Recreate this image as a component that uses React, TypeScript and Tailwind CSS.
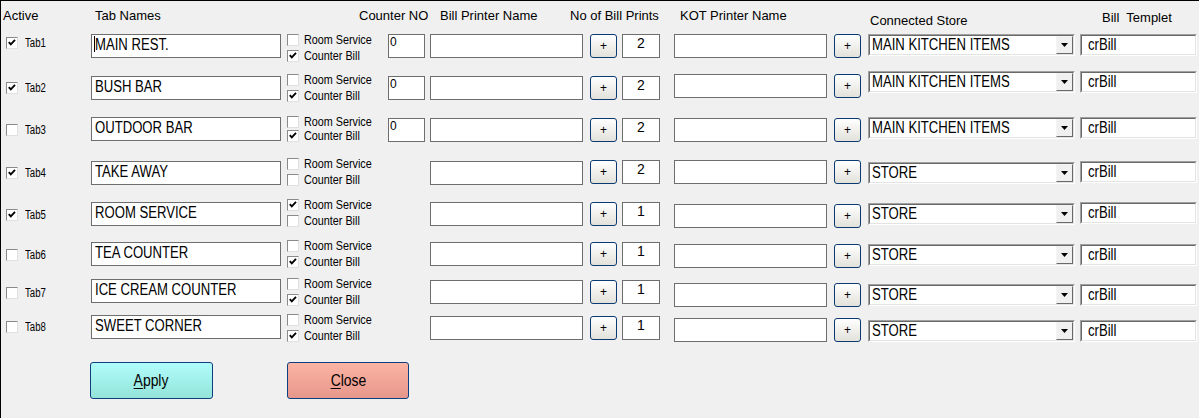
import React from 'react';

const MT = [
  'mt-0', 'mt-[1px]', 'mt-[2px]', 'mt-[3px]', 'mt-[4px]', 'mt-[5px]', 'mt-[6px]',
  'mt-[7px]', 'mt-[8px]', 'mt-[9px]', 'mt-[10px]', 'mt-[11px]', 'mt-[12px]',
];

type Row = {
  tab: string;
  active: boolean;
  name: string;
  rs: boolean;
  cb: boolean;
  counter?: string;
  prints: string;
  store: string;
  h: string;
  pitch: string;
  // active, name, rs, counter, bill, plus, prints, kot, kplus, combo, templet
  o: number[];
};

const ROWS: Row[] = [
  { tab: 'Tab1', active: true, name: 'MAIN REST.', rs: false, cb: true, counter: '0', prints: '2', store: 'MAIN KITCHEN ITEMS', h: 'h-[37px]', pitch: 'mt-[4px]', o: [3, 0, 0, 0, 0, 0, 0, 0, 0, 0, 0] },
  { tab: 'Tab2', active: true, name: 'BUSH BAR', rs: false, cb: true, counter: '0', prints: '2', store: 'MAIN KITCHEN ITEMS', h: 'h-[45px]', pitch: 'mt-[4px]', o: [11, 5, 3, 5, 5, 5, 5, 3, 3, 0, 0] },
  { tab: 'Tab3', active: false, name: 'OUTDOOR BAR', rs: false, cb: true, counter: '0', prints: '2', store: 'MAIN KITCHEN ITEMS', h: 'h-[42px]', pitch: 'mt-[2px]', o: [8, 1, 0, 2, 2, 2, 2, 2, 2, 1, 1] },
  { tab: 'Tab4', active: true, name: 'TAKE AWAY', rs: false, cb: false, prints: '2', store: 'STORE', h: 'h-[41px]', pitch: 'mt-[4px]', o: [9, 3, 0, 0, 3, 2, 2, 2, 2, 4, 3] },
  { tab: 'Tab5', active: true, name: 'ROOM SERVICE', rs: true, cb: false, prints: '1', store: 'STORE', h: 'h-[41px]', pitch: 'mt-[4px]', o: [10, 3, 0, 0, 3, 3, 3, 5, 5, 4, 3] },
  { tab: 'Tab6', active: false, name: 'TEA COUNTER', rs: false, cb: true, prints: '1', store: 'STORE', h: 'h-[38px]', pitch: 'mt-[4px]', o: [9, 2, 0, 0, 2, 2, 2, 4, 4, 4, 4] },
  { tab: 'Tab7', active: false, name: 'ICE CREAM COUNTER', rs: false, cb: true, prints: '1', store: 'STORE', h: 'h-[36px]', pitch: 'mt-[4px]', o: [9, 1, 0, 0, 2, 2, 2, 5, 5, 6, 6] },
  { tab: 'Tab8', active: false, name: 'SWEET CORNER', rs: false, cb: true, prints: '1', store: 'STORE', h: 'h-[36px]', pitch: 'mt-[4px]', o: [7, 1, 0, 0, 2, 2, 2, 4, 4, 6, 6] },
];

function Check({ on }: { on: boolean }) {
  return (
    <span className="block w-[12px] h-[12px] shrink-0 bg-white border border-t-[#8a8a8a] border-l-[#8a8a8a] border-r-[#e0e0e0] border-b-[#e0e0e0]">
      {on && (
        <svg width="10" height="10" viewBox="0 0 10 10" className="block">
          <path d="M1.8 4.2 L3.8 6.4 L8 1.9" fill="none" stroke="#000" strokeWidth="1.9" />
        </svg>
      )}
    </span>
  );
}

function TextBox({ w, children }: { w: string; children?: React.ReactNode }) {
  return <div className={`${w} h-[24px] shrink-0 bg-white border border-[#6e6e6e]`}>{children}</div>;
}

function PlusBtn() {
  return (
    <div className="w-[27px] h-[24px] shrink-0 rounded-[3px] border border-[#0b3a73] bg-linear-to-b from-white to-[#e2e1da] flex items-center justify-center text-[12px] leading-none">
      +
    </div>
  );
}

function Sunken({ w, children }: { w: string; children?: React.ReactNode }) {
  return (
    <div className={`${w} h-[22px] shrink-0 border border-t-[#a0a0a0] border-l-[#a0a0a0] border-r-white border-b-white`}>
      <div className="h-full bg-white border border-t-[#696969] border-l-[#696969] border-r-[#e3e3e3] border-b-[#e3e3e3] flex">
        {children}
      </div>
    </div>
  );
}

function Big({ children }: { children: React.ReactNode }) {
  return <span className="block origin-left scale-x-[0.82] text-[16px] leading-[16px] whitespace-nowrap">{children}</span>;
}

export default function App() {
  return (
    <div className="w-[1199px] h-[418px] bg-[#f0f0f0] border-t border-l border-black overflow-hidden text-black font-['Liberation_Sans',Arial,sans-serif]">
      {/* Header */}
      <div className="flex items-start h-[33px] text-[13px] leading-[16px] whitespace-nowrap">
        <div className="w-[92px] pl-[2px] mt-[7px]">Active</div>
        <div className="w-[266px] mt-[7px] pl-[2px]">Tab Names</div>
        <div className="w-[81px] mt-[7px]">Counter NO</div>
        <div className="w-[130px] mt-[7px]">Bill Printer Name</div>
        <div className="w-[110px] mt-[7px]">No of Bill Prints</div>
        <div className="w-[190px] mt-[7px]">KOT Printer Name</div>
        <div className="w-[232px] mt-[12px]">Connected Store</div>
        <div className="mt-[9px]">Bill&nbsp; Templet</div>
      </div>

      {/* Rows */}
      {ROWS.map((r, i) => (
        <div key={r.tab} className={`flex items-start ${r.h}`}>
          <div className={`w-[90px] shrink-0 flex items-center pl-[5px] ${MT[r.o[0]]}`}>
            <Check on={r.active} />
            <span className="ml-[7px] block origin-left scale-x-[0.8] text-[12px] leading-[12px]">{r.tab}</span>
          </div>

          <div className={`w-[196px] shrink-0 ${MT[r.o[1]]}`}>
            <div className="relative flex items-start w-[190px] h-[24px] bg-white border border-[#6e6e6e] pl-[3px] pt-[2px]">
              {i === 0 && <span className="absolute left-[2px] top-[1px] w-px h-[16px] bg-black" />}
              <Big>{r.name}</Big>
            </div>
          </div>

          <div className={`w-[101px] shrink-0 ${MT[r.o[2]]}`}>
            <div className="flex items-center h-[12px]">
              <Check on={r.rs} />
              <span className="ml-[5px] block origin-left scale-x-[0.83] text-[13px] leading-[12px] whitespace-nowrap">Room Service</span>
            </div>
            <div className={`flex items-center h-[12px] ${r.pitch}`}>
              <Check on={r.cb} />
              <span className="ml-[5px] block origin-left scale-x-[0.83] text-[13px] leading-[12px] whitespace-nowrap">Counter Bill</span>
            </div>
          </div>

          <div className={`w-[42px] shrink-0 ${MT[r.o[3]]}`}>
            {r.counter !== undefined && (
              <TextBox w="w-[37px]">
                <div className="pl-[1px] pt-[1px] text-[12px] leading-[13px]">{r.counter}</div>
              </TextBox>
            )}
          </div>

          <div className={`w-[160px] shrink-0 ${MT[r.o[4]]}`}>
            <TextBox w="w-[153px]" />
          </div>

          <div className={`w-[32px] shrink-0 ${MT[r.o[5]]}`}>
            <PlusBtn />
          </div>

          <div className={`w-[52px] shrink-0 ${MT[r.o[6]]}`}>
            <TextBox w="w-[38px]">
              <div className="text-center text-[14px] leading-[16px]">{r.prints}</div>
            </TextBox>
          </div>

          <div className={`w-[160px] shrink-0 ${MT[r.o[7]]}`}>
            <TextBox w="w-[153px]" />
          </div>

          <div className={`w-[34px] shrink-0 ${MT[r.o[8]]}`}>
            <PlusBtn />
          </div>

          <div className={`w-[212px] shrink-0 ${MT[r.o[9]]}`}>
            <Sunken w="w-[207px]">
              <div className="flex-1 flex items-start pl-[2px] pt-[1px]">
                <Big>{r.store}</Big>
              </div>
              <div className="w-[17px] h-full shrink-0 bg-[#f0f0f0] border border-t-[#f4f4f4] border-l-[#f4f4f4] border-r-[#6a6a6a] border-b-[#6a6a6a] flex items-center justify-center">
                <svg width="7" height="4" viewBox="0 0 7 4" className="block">
                  <path d="M0 0 H7 L3.5 4 Z" fill="#000" />
                </svg>
              </div>
            </Sunken>
          </div>

          <div className={`shrink-0 ${MT[r.o[10]]}`}>
            <Sunken w="w-[117px]">
              <div className="flex items-start pl-[6px] pt-[1px]">
                <Big>crBill</Big>
              </div>
            </Sunken>
          </div>
        </div>
      ))}

      {/* Buttons */}
      <div className="flex items-start mt-[12px]">
        <div className="ml-[89px] w-[123px] h-[37px] rounded-[3px] border border-[#0d3f7c] bg-linear-to-b from-[#b0fcfc] to-[#94e4d9] flex items-center justify-center">
          <span className="block scale-x-[0.87] text-[16px] leading-[16px]">
            <u className="underline-offset-2">A</u>pply
          </span>
        </div>
        <div className="ml-[74px] w-[122px] h-[37px] rounded-[3px] border border-[#0d3f7c] bg-linear-to-b from-[#fcb4a4] to-[#e6978b] flex items-center justify-center">
          <span className="block scale-x-[0.87] text-[16px] leading-[16px]">
            <u className="underline-offset-2">C</u>lose
          </span>
        </div>
      </div>
    </div>
  );
}
